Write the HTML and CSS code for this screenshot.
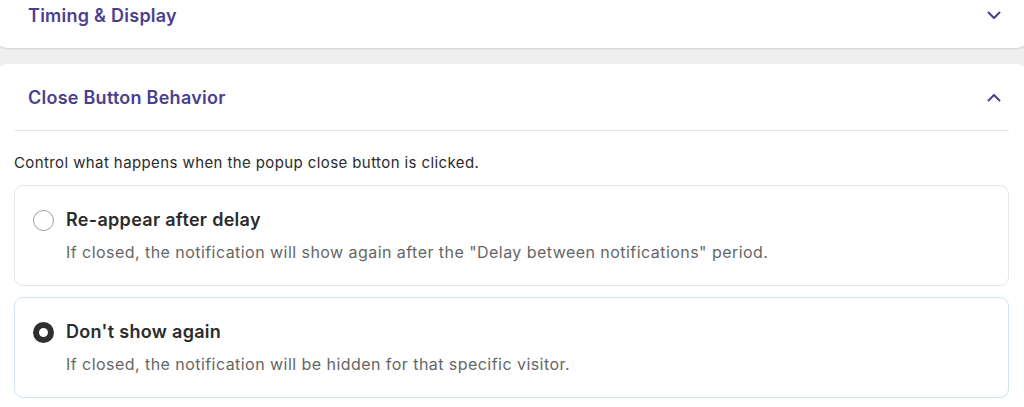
FILE: index.html
```html
<!DOCTYPE html>
<html lang="en">
<head>
    <meta charset="UTF-8">
    <meta name="viewport" content="width=device-width, initial-scale=1.0">
    <title>Popup Settings</title>
    <link rel="stylesheet" href="styles.css">
</head>
<body>
    <div class="settings">
        <!-- Timing & Display (collapsed) -->
        <section class="panel">
            <div class="panel-header">
                <h3 class="panel-title">Timing &amp; Display</h3>
                <svg class="chevron" width="14" height="14" viewBox="0 0 14 14" fill="none" stroke="currentColor" stroke-width="2" stroke-linecap="round" stroke-linejoin="round">
                    <path d="M1.5 4.5 L7 10 L12.5 4.5"/>
                </svg>
            </div>
        </section>

        <!-- Close Button Behavior (open) -->
        <section class="panel">
            <div class="panel-header open">
                <h3 class="panel-title">Close Button Behavior</h3>
                <svg class="chevron" width="14" height="14" viewBox="0 0 14 14" fill="none" stroke="currentColor" stroke-width="2" stroke-linecap="round" stroke-linejoin="round">
                    <path d="M1.5 9.5 L7 4 L12.5 9.5"/>
                </svg>
            </div>
            <div class="panel-body">
                <p class="panel-intro">Control what happens when the popup close button is clicked.</p>

                <label class="option">
                    <span class="radio"></span>
                    <span class="option-text">
                        <span class="option-title">Re-appear after delay</span>
                        <span class="option-desc">If closed, the notification will show again after the "Delay between notifications" period.</span>
                    </span>
                </label>

                <label class="option selected">
                    <span class="radio checked"></span>
                    <span class="option-text">
                        <span class="option-title">Don't show again</span>
                        <span class="option-desc">If closed, the notification will be hidden for that specific visitor.</span>
                    </span>
                </label>
            </div>
        </section>
    </div>
</body>
</html>
```

FILE: styles.css
```css
:root {
    --morado: #4b3f8f;
    --fondo: #efefef;
    --blanco: #ffffff;
    --texto: #2b2b2b;
    --texto-suave: #666666;
    --borde: #e6e6e6;
    --borde-activo: #cfe3f7;
}

body {
    font-family: 'Inter', 'Liberation Sans', sans-serif;
    background-color: var(--fondo);
    margin: 0;
    padding: 0;
    color: var(--texto);
}

.settings {
    display: flex;
    flex-direction: column;
    gap: 16px;
    margin: -18px -6px 0 -6px;
}

.panel {
    background: var(--blanco);
    border-radius: 14px;
    box-shadow: 0 1px 2px rgba(0, 0, 0, 0.12);
    padding: 0 21px 0 20px;
}

.panel-header {
    display: flex;
    align-items: center;
    justify-content: space-between;
    height: 66px;
    padding: 0 8px 0 14px;
}

.panel-header.open {
    padding-top: 1px;
    height: 65px;
    border-bottom: 1px solid var(--borde);
}

.panel-title {
    margin: 0;
    font-size: 18px;
    font-weight: 600;
    letter-spacing: 0.25px;
    color: var(--morado);
}

.chevron {
    color: var(--morado);
}

.panel-body {
    padding: 22px 0 12px 0;
}

.panel-intro {
    margin: 0 0 12px 0;
    font-size: 15px;
    line-height: 20px;
    letter-spacing: 0.4px;
    color: var(--texto);
}

.option {
    display: flex;
    align-items: flex-start;
    gap: 12px;
    border: 1px solid var(--borde);
    border-radius: 9px;
    padding: 23px 18px 22px 18px;
    margin-bottom: 11px;
    cursor: pointer;
}

.option.selected {
    border-color: var(--borde-activo);
}

.radio {
    flex: none;
    box-sizing: border-box;
    width: 21px;
    height: 21px;
    margin-top: 1px;
    border-radius: 50%;
    border: 1px solid #9a9a9a;
    background: var(--blanco);
}

.radio.checked {
    border: 6px solid #2f2f2f;
}

.option-text {
    display: flex;
    flex-direction: column;
    gap: 10px;
}

.option-title {
    font-size: 18px;
    font-weight: 600;
    letter-spacing: 0.3px;
    color: var(--texto);
    line-height: 22px;
}

.option-desc {
    font-size: 16px;
    letter-spacing: 0.45px;
    color: var(--texto-suave);
    line-height: 22px;
}
```
